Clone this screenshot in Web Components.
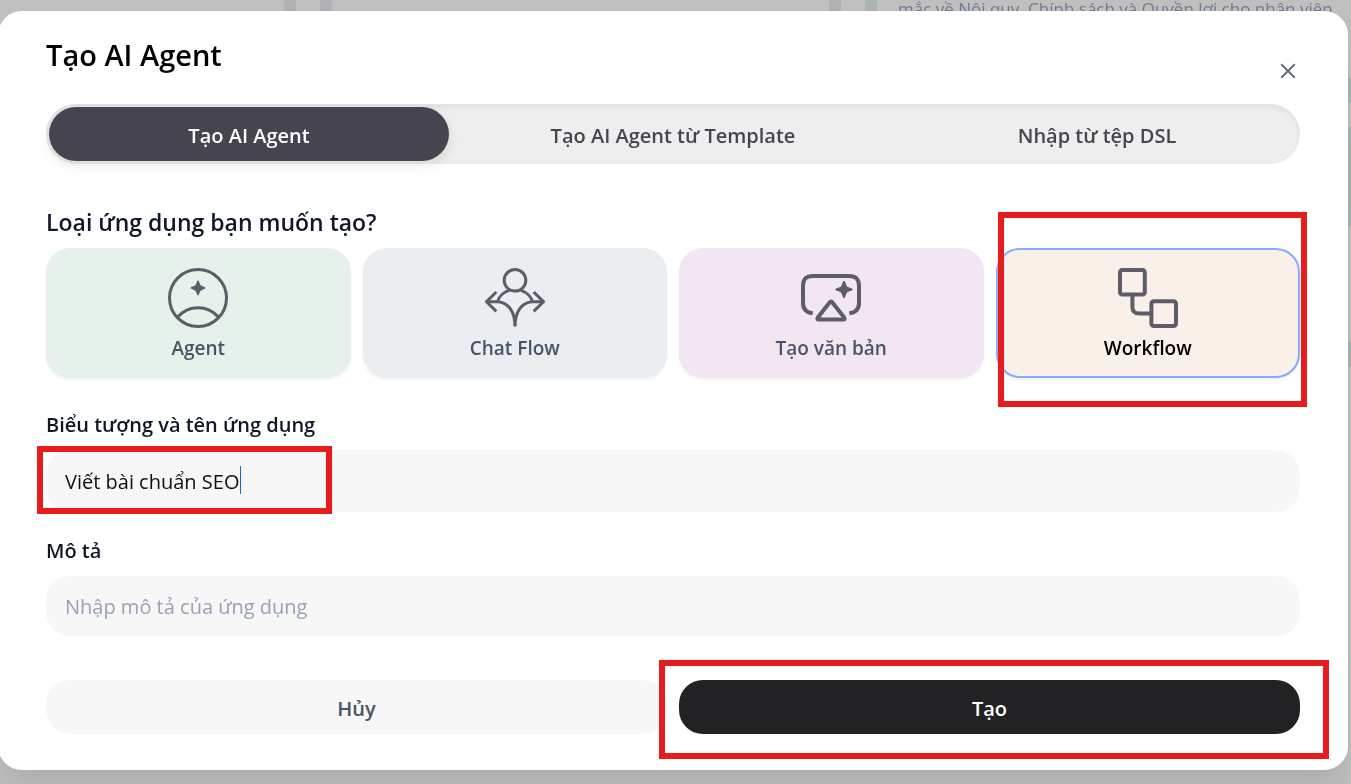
<!DOCTYPE html>
<html lang="vi">
<head>
<meta charset="UTF-8">
<meta name="viewport" content="width=device-width, initial-scale=1.0">
<title>Tạo AI Agent</title>
<style>
    * {
        box-sizing: border-box;
    }

    body {
        margin: 0;
        min-height: 100vh;
        overflow: hidden;
        background: #bfbfbf;
        font-family: "Open Sans", "Noto Sans", sans-serif;
    }
</style>
</head>
<body>
    <agent-backdrop></agent-backdrop>
    <create-dialog heading="Tạo AI Agent">
        <tab-bar></tab-bar>
        <type-picker heading="Loại ứng dụng bạn muốn tạo?">
            <type-card icon="agent" label="Agent" style="--tint: #e7f1eb"></type-card>
            <type-card icon="chat" label="Chat Flow" style="--tint: #eaeef1"></type-card>
            <type-card icon="text" label="Tạo văn bản" style="--tint: #f2e7f0"></type-card>
            <type-card icon="workflow" label="Workflow" selected style="--tint: #f9f0ea"></type-card>
        </type-picker>
        <text-field label="Biểu tượng và tên ứng dụng" value="Viết bài chuẩn SEO" active></text-field>
        <text-field label="Mô tả" placeholder="Nhập mô tả của ứng dụng"></text-field>
        <dialog-actions></dialog-actions>
    </create-dialog>

<script>
// List of agents behind the dialog
class AgentBackdrop extends HTMLElement {
    constructor() {
        super();
        this.attachShadow({ mode: 'open' });
    }

    connectedCallback() {
        this.shadowRoot.innerHTML = `
            <style>
                :host {
                    position: fixed;
                    inset: 0;
                    overflow: hidden;
                    display: flex;
                    align-items: flex-start;
                    gap: 24px;
                    z-index: 0;
                }

                .card {
                    box-sizing: border-box;
                    flex: 0 0 521px;
                    height: 400px;
                    border: 12px solid #b0b1b4;
                    border-width: 0 12px;
                    color: #717a8d;
                    font-size: 17px;
                    line-height: 24px;
                }

                .card:first-of-type {
                    margin-left: -225px;
                }

                .card.green {
                    border-color: #acb4af;
                    padding-left: 21px;
                    background: linear-gradient(
                        transparent 78px, #a8b2ac 78px 103px,
                        transparent 103px 127px, #a8b2ac 127px 226px,
                        transparent 226px 342px, #a8b2ac 342px 367px,
                        transparent 367px);
                }

                p {
                    margin: 0;
                    white-space: nowrap;
                    margin-top: -3px;
                }
            </style>
            <div class="card"></div>
            <div class="card"></div>
            <div class="card green"><p>mắc về Nội quy, Chính sách và Quyền lợi cho nhân viên</p></div>
        `;
    }
}

// White modal with title and close button
class CreateDialog extends HTMLElement {
    constructor() {
        super();
        this.attachShadow({ mode: 'open' });
    }

    connectedCallback() {
        this.shadowRoot.innerHTML = `
            <style>
                :host {
                    display: block;
                    position: relative;
                    z-index: 1;
                    margin: 11px 3px 14px -2px;
                    padding: 24px 48px 36px;
                    border-radius: 24px;
                    background: #fff;
                    box-shadow: 0 30px 36px -6px rgba(16, 24, 40, 0.08), 0 12px 12px -6px rgba(16, 24, 40, 0.03);
                }

                header {
                    display: flex;
                    justify-content: space-between;
                    height: 69px;
                }

                h1 {
                    margin: 0;
                    font-size: 29px;
                    font-weight: 600;
                    line-height: 40px;
                    color: #000;
                }

                .close {
                    display: flex;
                    align-items: center;
                    justify-content: center;
                    align-self: center;
                    width: 24px;
                    height: 24px;
                    padding: 0;
                    border: none;
                    background: none;
                    cursor: pointer;
                    margin-top: 2px;
                }
            </style>
            <header>
                <h1>${this.getAttribute('heading')}</h1>
                <button class="close" aria-label="Đóng">
                    <svg width="16" height="16" viewBox="0 0 16 16" fill="none" stroke="#667085" stroke-width="2">
                        <path d="M1.2 1.2L14.8 14.8M14.8 1.2L1.2 14.8"/>
                    </svg>
                </button>
            </header>
            <slot></slot>
        `;
    }
}

class TabBar extends HTMLElement {
    constructor() {
        super();
        this.attachShadow({ mode: 'open' });
    }

    connectedCallback() {
        this.shadowRoot.innerHTML = `
            <style>
                :host {
                    display: grid;
                    grid-template-columns: repeat(3, 1fr);
                    gap: 24px;
                    padding: 3px;
                    border-radius: 30px;
                    background: #eee;
                    box-shadow: inset 0 3px 6px rgba(0, 0, 0, 0.06);
                }

                button {
                    height: 54px;
                    padding: 3px 0 0;
                    border: none;
                    border-radius: 27px;
                    background: none;
                    color: #46454f;
                    font: 600 20px/30px "Open Sans", "Noto Sans", sans-serif;
                    cursor: pointer;
                }

                button.active {
                    background: #46454f;
                    color: #fff;
                    box-shadow: 0 4px 12px rgba(0, 0, 0, 0.1);
                }
            </style>
            <button class="active">Tạo AI Agent</button>
            <button>Tạo AI Agent từ Template</button>
            <button>Nhập từ tệp DSL</button>
        `;
    }
}

class TypePicker extends HTMLElement {
    constructor() {
        super();
        this.attachShadow({ mode: 'open' });
    }

    connectedCallback() {
        this.shadowRoot.innerHTML = `
            <style>
                :host {
                    display: block;
                    margin-top: 42px;
                }

                h2 {
                    margin: 0 0 10px;
                    font-size: 23px;
                    font-weight: 600;
                    line-height: 32px;
                    color: #101828;
                }

                .grid {
                    display: grid;
                    grid-template-columns: repeat(4, 1fr);
                    gap: 12px;
                }
            </style>
            <h2>${this.getAttribute('heading')}</h2>
            <div class="grid"><slot></slot></div>
        `;
    }
}

const ICONS = {
    agent: `
        <g stroke-width="3">
            <circle cx="30" cy="30" r="28.5"/>
            <path d="M9.7 49A26.7 26.7 0 0 1 50.3 49"/>
        </g>
        <path fill="#5c5d67" stroke="none" d="M30 12.6C30.8 12.6 31 13.4 31.4 14.7C32.3 17.3 32.9 17.8 35.3 18.6C36.6 19 37.2 19.2 37.2 20C37.2 20.8 36.6 21 35.3 21.4C32.9 22.2 32.3 22.7 31.4 25.3C31 26.6 30.8 27.4 30 27.4C29.2 27.4 29 26.6 28.6 25.3C27.7 22.7 27.1 22.2 24.7 21.4C23.4 21 22.8 20.8 22.8 20C22.8 19.2 23.4 19 24.7 18.6C27.1 17.8 27.7 17.3 28.6 14.7C29 13.4 29.2 12.6 30 12.6Z"/>`,
    chat: `
        <g stroke-width="3">
            <circle cx="30" cy="12.3" r="10.8"/>
            <path d="M24.3 22.2C18.5 24.5 13.3 29 12.8 33.7M35.7 22.2C41.5 24.5 46.7 29 47.2 33.7"/>
            <path d="M1.5 33.7H12.8C23 34.3 30 43.5 30 58.5C30 43.5 37 34.3 47.2 33.7H58.5"/>
            <path d="M11.3 24L1.5 33.7L11.3 43.4M48.7 24L58.5 33.7L48.7 43.4"/>
        </g>`,
    text: `
        <g stroke-width="4">
            <path d="M11.7 45.3C5.5 44.5 2 41.5 2 35V18C2 11 5 8 12 8H48C55 8 58 11 58 18V35C58 41.5 54.5 44.5 48.3 45.3"/>
            <path stroke-linejoin="round" d="M28.8 34.2C29.5 33.2 30.5 33.2 31.2 34.2L43.2 49.6C43.9 50.7 43.6 51.6 42.4 51.6H17.6C16.4 51.6 16.1 50.7 16.8 49.6Z"/>
        </g>
        <path fill="#5c5d67" stroke="none" d="M43 12.8C43.8 12.8 44.1 13.7 44.6 15.3C45.7 18.6 46.2 19 49.4 20C50.8 20.4 51.6 20.7 51.6 21.5C51.6 22.3 50.8 22.6 49.4 23C46.2 24 45.7 24.4 44.6 27.7C44.1 29.3 43.8 30.2 43 30.2C42.2 30.2 41.9 29.3 41.4 27.7C40.3 24.4 39.8 24 36.6 23C35.2 22.6 34.4 22.3 34.4 21.5C34.4 20.7 35.2 20.4 36.6 20C39.8 19 40.3 18.6 41.4 15.3C41.9 13.7 42.2 12.8 43 12.8Z"/>`,
    workflow: `
        <g stroke-width="4">
            <rect x="2" y="2" width="24.8" height="24.6" rx="2.4"/>
            <rect x="33.4" y="33.2" width="24.6" height="24.8" rx="2.4"/>
            <path d="M14.4 27V39C14.4 43.2 17 45.6 21 45.6H33"/>
        </g>`
};

class TypeCard extends HTMLElement {
    constructor() {
        super();
        this.attachShadow({ mode: 'open' });
    }

    connectedCallback() {
        this.shadowRoot.innerHTML = `
            <style>
                :host {
                    display: block;
                    position: relative;
                }

                button {
                    display: flex;
                    flex-direction: column;
                    align-items: center;
                    gap: 4px;
                    box-sizing: border-box;
                    width: 100%;
                    height: 130px;
                    padding: 18px 0 0;
                    border: 2px solid var(--tint);
                    border-radius: 24px;
                    background: var(--tint);
                    box-shadow: 0 2px 3px rgba(16, 24, 40, 0.05);
                    color: #475467;
                    font: 600 19px/32px "Open Sans", "Noto Sans", sans-serif;
                    cursor: pointer;
                }

                :host([selected]) button {
                    border-color: #84adff;
                    color: #000;
                }

                /* red highlight round the chosen card */
                .mark {
                    position: absolute;
                    inset: -36px -7px -29px 2px;
                    border: 6px solid #e81c1c;
                    pointer-events: none;
                }

                :host(:not([selected])) .mark {
                    display: none;
                }
            </style>
            <button>
                <svg width="60" height="60" viewBox="0 0 60 60" fill="none" stroke="#5c5d67">${ICONS[this.getAttribute('icon')]}</svg>
                <span>${this.getAttribute('label')}</span>
            </button>
            <div class="mark"></div>
        `;
    }
}

class TextField extends HTMLElement {
    constructor() {
        super();
        this.attachShadow({ mode: 'open' });
    }

    connectedCallback() {
        this.shadowRoot.innerHTML = `
            <style>
                :host {
                    display: block;
                    margin-top: 23px;
                }

                :host([active]) {
                    margin-top: 31px;
                }

                label {
                    display: block;
                    margin-bottom: 9px;
                    font-size: 20px;
                    font-weight: 600;
                    line-height: 32px;
                    color: #101828;
                }

                .box {
                    position: relative;
                }

                input {
                    display: block;
                    box-sizing: border-box;
                    width: 100%;
                    height: 60px;
                    padding: 0 19px;
                    border: none;
                    border-radius: 24px;
                    outline: none;
                    background: #f7f7f7;
                    color: #101010;
                    font: 400 20px/30px "Open Sans", "Noto Sans", sans-serif;
                }

                :host([active]) input {
                    height: 62px;
                }

                input::placeholder {
                    color: #98a2b3;
                    opacity: 1;
                }

                .caret {
                    position: absolute;
                    top: 16px;
                    width: 1px;
                    height: 28px;
                    background: #155eef;
                }

                .mark {
                    position: absolute;
                    inset: -4px auto -2px -9px;
                    width: 283px;
                    border: 6px solid #e81c1c;
                    pointer-events: none;
                }

                :host(:not([active])) .caret,
                :host(:not([active])) .mark {
                    display: none;
                }
            </style>
            <label for="field">${this.getAttribute('label')}</label>
            <div class="box">
                <input id="field" type="text" value="${this.getAttribute('value') || ''}" placeholder="${this.getAttribute('placeholder') || ''}">
                <span class="caret"></span>
                <div class="mark"></div>
            </div>
        `;
        this.placeCaret();
    }

    // caret goes right after the last letter
    placeCaret() {
        const input = this.shadowRoot.querySelector('input');
        const ctx = document.createElement('canvas').getContext('2d');
        ctx.font = getComputedStyle(input).font;
        const width = Math.ceil(ctx.measureText(input.value).width);
        this.shadowRoot.querySelector('.caret').style.left = 19 + width + 'px';
    }
}

class DialogActions extends HTMLElement {
    constructor() {
        super();
        this.attachShadow({ mode: 'open' });
    }

    connectedCallback() {
        this.shadowRoot.innerHTML = `
            <style>
                :host {
                    display: grid;
                    grid-template-columns: 1fr 1fr;
                    gap: 12px;
                    margin-top: 44px;
                }

                .cell {
                    position: relative;
                }

                button {
                    display: block;
                    width: 100%;
                    height: 54px;
                    padding: 3px 0 0;
                    border: none;
                    border-radius: 24px;
                    background: #f7f7f7;
                    color: #475467;
                    font: 600 20px/30px "Open Sans", "Noto Sans", sans-serif;
                    cursor: pointer;
                }

                button.primary {
                    background: #222224;
                    color: #fff;
                }

                .mark {
                    position: absolute;
                    inset: -20px -29px -25px -20px;
                    border: 6px solid #e81c1c;
                    pointer-events: none;
                }
            </style>
            <div class="cell"><button>Hủy</button></div>
            <div class="cell">
                <button class="primary">Tạo</button>
                <div class="mark"></div>
            </div>
        `;
    }
}

customElements.define('agent-backdrop', AgentBackdrop);
customElements.define('create-dialog', CreateDialog);
customElements.define('tab-bar', TabBar);
customElements.define('type-picker', TypePicker);
customElements.define('type-card', TypeCard);
customElements.define('text-field', TextField);
customElements.define('dialog-actions', DialogActions);
</script>
</body>
</html>
